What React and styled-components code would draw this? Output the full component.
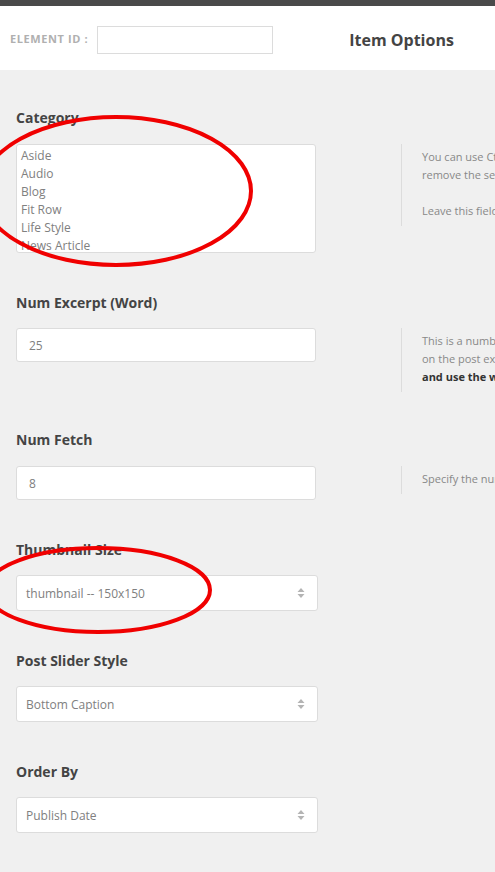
import React from 'react'
import styled, { createGlobalStyle } from 'styled-components'

const GlobalStyle = createGlobalStyle`
  html, body {
    margin: 0;
    padding: 0;
    background: #f0f0f0;
    overflow: hidden;
  }
  body {
    font-family: "Open Sans", "Liberation Sans", sans-serif;
  }
`

const Page = styled.div`
  position: relative;
  width: 495px;
  height: 872px;
  overflow: hidden;
  background: #f0f0f0;
`

const TopBar = styled.div`
  height: 6px;
  background: #4a4a4a;
`

const Header = styled.div`
  display: flex;
  align-items: center;
  height: 64px;
  background: #fff;
  padding-left: 10px;
  white-space: nowrap;
`

const IdLabel = styled.span`
  font-size: 11px;
  font-weight: 700;
  color: #b0b0b0;
  letter-spacing: 0.6px;
`

const IdInput = styled.div`
  width: 174px;
  height: 26px;
  margin-left: 9px;
  margin-top: 4px;
  border: 1px solid #dcdcdc;
  background: #fff;
`

const Title = styled.h2`
  margin: 4px 0 0 76px;
  font-size: 16px;
  font-weight: 700;
  color: #444;
`

const Body = styled.div`
  padding: 38px 0 0 16px;
`

const Section = styled.div`
  margin-bottom: ${p => p.$gap || 40}px;
`

const Label = styled.div`
  font-size: 14px;
  font-weight: 700;
  line-height: 20px;
  color: #444;
  margin-bottom: ${p => p.$mb || 15}px;
`

const Row = styled.div`
  display: flex;
  align-items: flex-start;
`

const Field = styled.div`
  flex: none;
  width: ${p => p.$width || 300}px;
`

const ListBox = styled.div`
  box-sizing: border-box;
  height: 109px;
  padding: 2px 4px;
  background: #fff;
  border: 1px solid #dcdcdc;
  border-radius: 3px;
  overflow: hidden;
`

const ListItem = styled.div`
  font-size: 12px;
  line-height: 18px;
  color: #808080;
`

const TextInput = styled.div`
  box-sizing: border-box;
  height: 34px;
  padding: 0 12px;
  display: flex;
  align-items: center;
  background: #fff;
  border: 1px solid #dcdcdc;
  border-radius: 3px;
  font-size: 12px;
  color: #808080;
`

const Select = styled.div`
  box-sizing: border-box;
  height: 36px;
  padding: 0 12px 0 9px;
  display: flex;
  align-items: center;
  justify-content: space-between;
  background: #fff;
  border: 1px solid #dcdcdc;
  border-radius: 3px;
  font-size: 12px;
  color: #808080;
`

const Desc = styled.div`
  flex: none;
  margin-left: 85px;
  padding: 4px 0 6px 20px;
  border-left: 1px solid #dcdcdc;
  font-size: 11px;
  line-height: 18px;
  color: #888;
  white-space: nowrap;

  p {
    margin: 0 0 18px;
  }
  p:last-child {
    margin-bottom: 0;
  }
  strong {
    color: #333;
  }
`

const Overlay = styled.svg`
  position: absolute;
  left: 0;
  top: 0;
  pointer-events: none;
`

const Arrows = () => (
  <svg width="8" height="10" viewBox="0 0 8 10">
    <path d="M4 0 L7.5 4 L0.5 4 Z" fill="#b4b4b4" />
    <path d="M4 10 L7.5 6 L0.5 6 Z" fill="#b4b4b4" />
  </svg>
)

const categories = ['Aside', 'Audio', 'Blog', 'Fit Row', 'Life Style', 'News Article', 'Photo']

export default function App() {
  return (
    <Page>
      <GlobalStyle />
      <TopBar />
      <Header>
        <IdLabel>ELEMENT ID :</IdLabel>
        <IdInput />
        <Title>Item Options</Title>
      </Header>
      <Body>
        <Section>
          <Label $mb={16}>Category</Label>
          <Row>
            <Field>
              <ListBox>
                {categories.map(c => <ListItem key={c}>{c}</ListItem>)}
              </ListBox>
            </Field>
            <Desc>
              <p>You can use Ctrl/Command button to select multiple categories or<br />remove the selected category.</p>
              <p>Leave this field blank to select all items in the list.</p>
            </Desc>
          </Row>
        </Section>

        <Section $gap={38}>
          <Label>Num Excerpt (Word)</Label>
          <Row>
            <Field>
              <TextInput>25</TextInput>
            </Field>
            <Desc>
              <p>
                This is a number of word (decided by spaces) that you want to show<br />
                on the post excerpt. <strong>Use 0 to hide the excerpt, -1 to show full posts</strong><br />
                <strong>and use the wordpress 'more' tag</strong>
              </p>
            </Desc>
          </Row>
        </Section>

        <Section>
          <Label $mb={16}>Num Fetch</Label>
          <Row>
            <Field>
              <TextInput>8</TextInput>
            </Field>
            <Desc>
              <p>Specify the number of items you want to pull out.</p>
            </Desc>
          </Row>
        </Section>

        <Section $gap={40}>
          <Label>Thumbnail Size</Label>
          <Field $width={302}>
            <Select>thumbnail -- 150x150<Arrows /></Select>
          </Field>
        </Section>

        <Section $gap={40}>
          <Label>Post Slider Style</Label>
          <Field $width={302}>
            <Select>Bottom Caption<Arrows /></Select>
          </Field>
        </Section>

        <Section>
          <Label>Order By</Label>
          <Field $width={302}>
            <Select>Publish Date<Arrows /></Select>
          </Field>
        </Section>
      </Body>

      <Overlay width="495" height="872" viewBox="0 0 495 872">
        <ellipse cx="116" cy="191" rx="135" ry="74" fill="none" stroke="#f00000" strokeWidth="4" />
        <ellipse cx="98" cy="590" rx="112" ry="42" fill="none" stroke="#f00000" strokeWidth="4" />
      </Overlay>
    </Page>
  )
}
